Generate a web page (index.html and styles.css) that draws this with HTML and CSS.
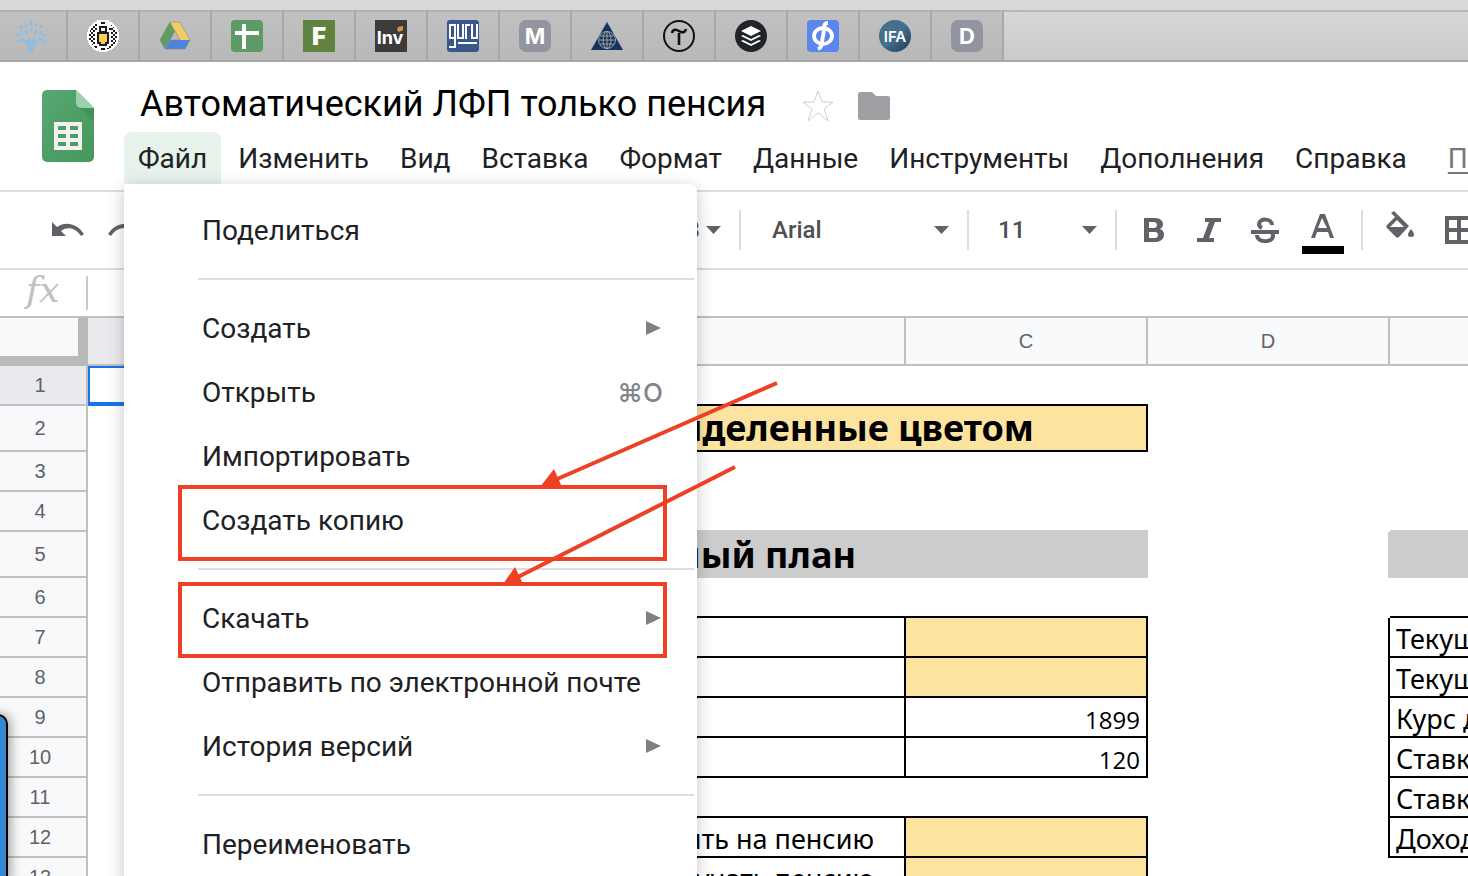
FILE: index.html
```html
<!DOCTYPE html>
<html lang="ru">
<head>
    <meta charset="UTF-8" />
    <meta name="viewport" content="width=device-width, initial-scale=1" />
    <title>Автоматический ЛФП только пенсия</title>
    <link rel="stylesheet" href="styles.css">
</head>
<body>
    <nav class="tabs" aria-label="Закреплённые вкладки">
        <button class="tab" aria-label="Дерево">
            <svg viewBox="0 0 32 32" fill="#8fbde3">
                <path d="M13 32c1-5 0-7-3-9l-5-5 1-1 6 4 1-4h1l2 5 3-5h1v4l6-4 1 1-6 6c-2 2-3 4-2 8z" />
                <g>
                    <ellipse cx="16" cy="3" rx="1.5" ry="3" /><ellipse cx="11" cy="5" rx="1.4" ry="2.4" transform="rotate(-25 11 5)" />
                    <ellipse cx="21" cy="5" rx="1.4" ry="2.4" transform="rotate(25 21 5)" /><ellipse cx="6" cy="7" rx="1.5" ry="2.5" transform="rotate(-45 6 7)" />
                    <ellipse cx="26" cy="7" rx="1.5" ry="2.5" transform="rotate(45 26 7)" /><ellipse cx="16" cy="10" rx="1.5" ry="2.6" />
                    <ellipse cx="11" cy="12" rx="1.4" ry="2.6" transform="rotate(-25 11 12)" /><ellipse cx="21" cy="12" rx="1.4" ry="2.6" transform="rotate(25 21 12)" />
                    <ellipse cx="6" cy="13" rx="1.3" ry="2.4" transform="rotate(-60 6 13)" /><ellipse cx="26" cy="13" rx="1.3" ry="2.4" transform="rotate(60 26 13)" />
                    <ellipse cx="2" cy="15" rx="1.3" ry="2.2" transform="rotate(-80 2 15)" /><ellipse cx="30" cy="15" rx="1.3" ry="2.2" transform="rotate(80 30 15)" />
                    <ellipse cx="4" cy="21" rx="1.4" ry="2.4" transform="rotate(70 4 21)" /><ellipse cx="28" cy="21" rx="1.4" ry="2.4" transform="rotate(-70 28 21)" />
                </g>
            </svg>
        </button>
        <button class="tab" aria-label="Пчела">
            <svg viewBox="0 0 32 32" shape-rendering="crispEdges">
                <defs>
                    <pattern id="checks" width="4" height="4" patternUnits="userSpaceOnUse">
                        <rect width="4" height="4" fill="#fff" /><path d="M0 0h2v2H0zM2 2h2v2H2z" fill="#1c1c22" />
                    </pattern>
                </defs>
                <circle cx="16" cy="16" r="16" fill="#fff" />
                <circle cx="16" cy="16" r="14" fill="url(#checks)" />
                <path d="M10 0h12v6h2v22h-4v4h-8v-4H8V6h2z" fill="#fff" />
                <path d="M14 2h4v2h-4zM12 6h8v6h2v12h-2v2h-8v-2h-2V12h2z" fill="#1c1c22" />
                <path d="M14 28h4v2h-4zM8 8h2v2H8zM22 8h2v2h-2zM8 26h2v2H8zM22 26h2v2h-2z" fill="#1c1c22" />
                <path d="M14 8h4v3h-4z" fill="#fff" /><path d="M12 14h8v8h-2v2h-4v-2h-2z" fill="#f7d04d" />
            </svg>
        </button>
        <button class="tab" aria-label="Google Диск">
            <svg viewBox="0 0 32 32">
                <path d="M11 2h10l10 18H21z" fill="#f3cb68" /><path d="M11 2l5 9L6 29 1 20z" fill="#5e9d62" />
                <path d="M11 20h20l-5 9H6z" fill="#4e83e0" />
                <path d="M11 2h10l10 18-5 9H6l-5-9zM16 11l-5 9h10z" fill="none" stroke="#83837a" stroke-width=".6" />
            </svg>
        </button>
        <button class="tab" aria-label="Таблица">
            <svg viewBox="0 0 32 32"><rect width="32" height="32" rx="4" fill="#5d9b66" /><path d="M11 4h4v7h13v4H15v14h-4V15H4v-4h7z" fill="#fff" /></svg>
        </button>
        <button class="tab" aria-label="F">
            <svg viewBox="0 0 32 32"><rect width="32" height="32" fill="#60833f" /><text class="glyph glyph-black" x="16" y="25" font-size="24">F</text></svg>
        </button>
        <button class="tab" aria-label="Inv">
            <svg viewBox="0 0 32 32"><rect width="32" height="32" fill="#3b3b3b" /><text class="glyph" x="15" y="24" font-size="18">Inv</text><path d="M23 7l5-1v4l-4 2-2-2z" fill="#d9963a" /></svg>
        </button>
        <button class="tab" aria-label="guru">
            <svg viewBox="0 0 32 32">
                <rect width="32" height="32" rx="3" fill="#38578d" />
                <g fill="none" stroke="#fff" stroke-width="2">
                    <path d="M8 18H3V5h5v22H2M11 4v14h5V4M19 19V5h4M25 4v14h5V4M11 23h19" />
                </g>
            </svg>
        </button>
        <button class="tab" aria-label="M">
            <svg viewBox="0 0 32 32"><rect width="32" height="32" rx="7" fill="#9295a0" /><text class="glyph" x="16" y="24" font-size="22">M</text></svg>
        </button>
        <button class="tab" aria-label="Глобус">
            <svg viewBox="0 0 32 32">
                <path d="M16 2l16 28H0z" fill="#15335f" />
                <g fill="none" stroke="#b9b9a8" stroke-width=".8">
                    <circle cx="16" cy="20" r="8.5" /><ellipse cx="16" cy="20" rx="4" ry="8.5" /><path d="M16 12v17M8 20h16M9 16h14M9 24h14" />
                </g>
            </svg>
        </button>
        <button class="tab" aria-label="T">
            <svg viewBox="0 0 32 32" fill="none" stroke="#111"><circle cx="16" cy="16" r="15" stroke-width="2" /><path d="M9 13c1-4 4-4 7-2s6 2 7-2M16 13v12" stroke-width="2.6" /></svg>
        </button>
        <button class="tab" aria-label="Buffer">
            <svg viewBox="0 0 32 32"><circle cx="16" cy="16" r="16" fill="#20242a" /><path d="M16 6l10 5-10 5-10-5z" fill="#fff" /><path d="M6 16l2-1 8 4 8-4 2 1-10 5zM6 21l2-1 8 4 8-4 2 1-10 5z" fill="#fff" /></svg>
        </button>
        <button class="tab" aria-label="Ф">
            <svg viewBox="0 0 32 32"><rect width="32" height="32" rx="4" fill="#5b86ee" /><g fill="none" stroke="#fff" stroke-width="3.8"><ellipse cx="16" cy="16" rx="9" ry="8" /><path d="M21 3c-4 0-4 3-4 7l-2 12c0 4-1 6-4 7" /></g></svg>
        </button>
        <button class="tab" aria-label="IFA">
            <svg viewBox="0 0 32 32">
                <defs><linearGradient id="ifa" x1="0" y1="0" x2="1" y2="1"><stop offset=".5" stop-color="#42708d" /><stop offset="1" stop-color="#22384f" /></linearGradient></defs>
                <circle cx="16" cy="16" r="16" fill="url(#ifa)" /><text class="glyph glyph-medium" x="16" y="22" font-size="15">IFA</text>
            </svg>
        </button>
        <button class="tab" aria-label="D">
            <svg viewBox="0 0 32 32"><rect width="32" height="32" rx="7" fill="#9295a0" /><text class="glyph" x="16" y="24" font-size="22">D</text></svg>
        </button>
    </nav>

    <header class="header">
        <svg class="logo" viewBox="0 0 52 72" aria-hidden="true">
            <defs><linearGradient id="sheet" x1="0" y1="0" x2="1" y2="1"><stop offset="0" stop-color="#57a773" /><stop offset="1" stop-color="#45985a" /></linearGradient></defs>
            <path d="M5 0h29l18 18v49a5 5 0 0 1-5 5H5a5 5 0 0 1-5-5V5a5 5 0 0 1 5-5z" fill="url(#sheet)" />
            <path d="M37 17l15 14V18z" fill="#3d8a56" opacity=".6" />
            <path d="M34 0l18 18H39a5 5 0 0 1-5-5z" fill="#9bd0b1" />
            <path d="M12 32h28v28H12zM16 36v4h8v-4zm12 0v4h8v-4zM16 44v4h8v-4zm12 0v4h8v-4zM16 52v4h8v-4zm12 0v4h8v-4z" fill="#f1f1f1" fill-rule="evenodd" />
        </svg>
        <div class="document">
            <div class="title-row">
                <h1 class="title">Автоматический ЛФП только пенсия</h1>
                <button class="icon-btn star" aria-label="Добавить в помеченные">
                    <svg width="32" height="32" viewBox="0 0 32 32"><path d="M16 1l4 11h11l-9 7 4 12-10-8-10 8 4-12-9-7h11z" fill="none" stroke="#cfcfcf" /></svg>
                </button>
                <button class="icon-btn" aria-label="Переместить в папку">
                    <svg width="32" height="28" viewBox="0 0 32 28"><path d="M2 0h12l4 4h12a2 2 0 0 1 2 2v20a2 2 0 0 1-2 2H2a2 2 0 0 1-2-2V2a2 2 0 0 1 2-2z" fill="#9f9fa3" /></svg>
                </button>
            </div>
            <div class="menubar">
                <div class="menu-wrap">
                    <button class="menu-btn open">Файл</button>
                    <div class="menu" role="menu">
                        <button class="item" role="menuitem">Поделиться</button>
                        <hr class="rule">
                        <button class="item" role="menuitem">Создать <svg class="more" viewBox="0 0 15 14"><path d="M0 0l15 7-15 7z" /></svg></button>
                        <button class="item" role="menuitem">Открыть <kbd class="keys">⌘O</kbd></button>
                        <button class="item" role="menuitem">Импортировать</button>
                        <button class="item" role="menuitem">Создать копию</button>
                        <hr class="rule">
                        <button class="item" role="menuitem">Скачать <svg class="more" viewBox="0 0 15 14"><path d="M0 0l15 7-15 7z" /></svg></button>
                        <button class="item" role="menuitem">Отправить по электронной почте</button>
                        <button class="item" role="menuitem">История версий <svg class="more" viewBox="0 0 15 14"><path d="M0 0l15 7-15 7z" /></svg></button>
                        <hr class="rule">
                        <button class="item" role="menuitem">Переименовать</button>
                    </div>
                </div>
                <button class="menu-btn">Изменить</button>
                <button class="menu-btn">Вид</button>
                <button class="menu-btn">Вставка</button>
                <button class="menu-btn">Формат</button>
                <button class="menu-btn">Данные</button>
                <button class="menu-btn">Инструменты</button>
                <button class="menu-btn">Дополнения</button>
                <button class="menu-btn">Справка</button>
                <a class="history" href="#">Последнее изменение</a>
            </div>
        </div>
    </header>

    <div class="toolbar" role="toolbar">
        <div class="group group-left">
            <button class="icon-btn" aria-label="Отменить">
                <svg width="32" height="18" viewBox="0 0 32 18"><path d="M0 1v14h14l-5-5c6-5 15-3 20 5l3-2C25 2 13 0 5 6z" fill="#5f6368" /></svg>
            </button>
            <button class="icon-btn redo" aria-label="Повторить">
                <svg width="32" height="18" viewBox="0 0 32 18"><path d="M32 1v14H18l5-5C17 5 8 7 3 15l-3-2C7 2 19 0 27 6z" fill="#5f6368" /></svg>
            </button>
            <button class="format-btn">123 <svg class="caret" viewBox="0 0 15 8"><path d="M0 0h15L7.500 8z" /></svg></button>
        </div>
        <label class="group group-font">
            <select class="select" aria-label="Шрифт"><option>Arial</option></select>
            <svg class="caret" viewBox="0 0 15 8"><path d="M0 0h15L7.500 8z" /></svg>
        </label>
        <label class="group group-size">
            <select class="select" aria-label="Размер шрифта"><option>11</option></select>
            <svg class="caret" viewBox="0 0 15 8"><path d="M0 0h15L7.500 8z" /></svg>
        </label>
        <div class="group group-style">
            <button class="tool" aria-label="Полужирный">
                <svg viewBox="2 0 42 48"><path d="M12 12h11c5 0 8 3 8 6 0 2-1 4-3 5 3 1 4 3 4 6 0 4-4 7-8 7H12zm5 4v6h5c4 0 4-6 0-6zm0 10v6h6c4 0 4-6 0-6z" fill-rule="evenodd" /></svg>
            </button>
            <button class="tool" aria-label="Курсив">
                <svg viewBox="2 0 42 48"><path d="M17 12h16v4h-6l-6 16h5v4H9v-4h6l6-16h-4z" /></svg>
            </button>
            <button class="tool" aria-label="Зачёркнутый">
                <svg viewBox="2 0 42 48"><path d="M7 24h28v4H7z" /><path d="M28 19c0-7-13-7-13-1 0 2 1 3 3 4M13 29c0 8 16 8 16 1 0-1 0-2-1-3" fill="none" stroke="#5f6368" stroke-width="4" /></svg>
            </button>
            <button class="tool" aria-label="Цвет текста">
                <svg viewBox="0 0 42 48"><path d="M18 8h5l9 24h-4l-2-6H15l-2 6H9zM20 12l-4 10h9z" fill-rule="evenodd" /><path d="M0 40h42v8H0z" fill="#000" /></svg>
            </button>
        </div>
        <div class="group group-fill">
            <button class="tool" aria-label="Цвет заливки">
                <svg viewBox="0 0 42 48"><path d="M13 7l3-2 15 15-10 11c-1 1-2 1-3 0l-9-9c-1-1-1-2 0-3l8-8zm6 7l-7 7h14z" fill-rule="evenodd" /><path d="M33 23c4 5 4 8 0 8s-4-3 0-8z" /></svg>
            </button>
            <button class="tool" aria-label="Границы">
                <svg viewBox="0 0 42 48"><path d="M7 10h28v28H7zM11 14v8h8v-8zm12 0v8h8v-8zM11 26v8h8v-8zm12 0v8h8v-8z" fill-rule="evenodd" /></svg>
            </button>
        </div>
    </div>

    <div class="formula-bar">
        <label class="fx" for="formula">fx</label>
        <input class="formula" id="formula" type="text">
    </div>

    <main class="sheet">
        <table class="grid">
            <colgroup>
                <col class="col-head"><col class="col-a"><col class="col-b"><col class="col-c"><col class="col-d"><col class="col-e">
            </colgroup>
            <thead>
                <tr><th class="corner"></th><th class="selected">A</th><th>B</th><th>C</th><th>D</th><th>E</th></tr>
            </thead>
            <tbody>
                <tr><th class="selected">1</th><td class="active"></td><td class="line-b"></td><td class="line-b"></td><td></td><td></td></tr>
                <tr class="tall"><th>2</th><td></td><td class="heading heading-top input line-b line-r" colspan="2">Ячейки, выделенные цветом</td><td></td><td></td></tr>
                <tr><th>3</th><td></td><td></td><td></td><td></td><td></td></tr>
                <tr><th>4</th><td></td><td class="band-top"></td><td class="band-top"></td><td></td><td class="band-top"></td></tr>
                <tr class="tall"><th>5</th><td></td><td class="heading heading-plan band" colspan="2">Пенсионный план</td><td class="band-r"></td><td class="band"></td></tr>
                <tr><th>6</th><td></td><td class="line-b"></td><td class="line-b"></td><td></td><td class="line-b"></td></tr>
                <tr><th>7</th><td></td><td class="line-b line-r"></td><td class="input line-b line-r"></td><td class="line-r"></td><td class="line-b">Текущий год</td></tr>
                <tr><th>8</th><td></td><td class="line-b line-r"></td><td class="input line-b line-r"></td><td class="line-r"></td><td class="line-b">Текущий месяц</td></tr>
                <tr><th>9</th><td></td><td class="line-b line-r"></td><td class="number line-b line-r">1899</td><td class="line-r"></td><td class="line-b">Курс доллара</td></tr>
                <tr><th>10</th><td></td><td class="line-b line-r"></td><td class="number line-b line-r">120</td><td class="line-r"></td><td class="line-b">Ставка</td></tr>
                <tr><th>11</th><td></td><td class="line-b"></td><td class="line-b"></td><td class="line-r"></td><td class="line-b">Ставка</td></tr>
                <tr><th>12</th><td></td><td class="label line-b line-r">Копить на пенсию</td><td class="input line-b line-r"></td><td class="line-r"></td><td class="line-b">Доходность</td></tr>
                <tr><th>13</th><td></td><td class="label line-b line-r">Получать пенсию</td><td class="input line-b line-r"></td><td></td><td></td></tr>
            </tbody>
        </table>
    </main>

    <aside class="widget"></aside>

    <!-- Highlights over the menu -->
    <svg class="marks" aria-hidden="true">
        <g fill="none" stroke="#ed4024" stroke-width="4">
            <rect x="180" y="487" width="485" height="72" />
            <rect x="180" y="584" width="485" height="72" />
            <path d="M777 383L555 480M735 467L516 578" />
        </g>
        <path d="M540 487l14-18 8 18zM503 584l12-17 8 17z" fill="#ed4024" />
    </svg>
</body>
</html>
```
FILE: styles.css
```css
*, *::before, *::after {
    box-sizing: border-box;
}

body {
    margin: 0;
    height: 100vh;
    overflow: hidden;
    position: relative;
    background: #fff;
    color: #202124;
    font-family: Roboto, Arial, sans-serif;
    font-size: 28px;
}

button {
    padding: 0;
    border: none;
    background: none;
    color: inherit;
    font: inherit;
    cursor: pointer;
}

svg {
    display: block;
}

/* Browser tabs */
.tabs {
    display: flex;
    height: 62px;
    padding-top: 10px;
    background: linear-gradient(#dadada, #cacaca);
    border-bottom: 2px solid #a6a6a6;
    overflow: hidden;
}

.tab {
    flex: none;
    display: flex;
    align-items: center;
    justify-content: center;
    width: 72px;
    border-top: 2px solid #b2b2b2;
    border-right: 2px solid #a8a8a8;
    background: linear-gradient(#c1c1c1, #b8b8b8);
}

.tab:first-child {
    margin-left: -4px;
}

.tab svg {
    width: 32px;
    height: 32px;
}

.tabs::after {
    content: "";
    flex: 1;
    border-top: 2px solid #b8b8b8;
}

.glyph {
    fill: #fff;
    font-family: Inter, sans-serif;
    font-weight: 700;
    text-anchor: middle;
}

.glyph-medium {
    font-weight: 600;
}

.glyph-black {
    font-weight: 900;
}

/* Document header */
.header {
    display: flex;
    height: 130px;
    padding: 14px 0 0 42px;
    border-bottom: 2px solid #dadce0;
    white-space: nowrap;
}

.logo {
    flex: none;
    width: 52px;
    height: 72px;
    margin: 14px 30px 0 0;
}

.document {
    flex: 1;
    min-width: 0;
}

.title-row {
    display: flex;
    align-items: center;
    height: 56px;
    padding-left: 16px;
}

.title-row .icon-btn {
    padding-top: 3px;
}

.title {
    margin: 0;
    color: #000;
    font-size: 36px;
    font-weight: 400;
}

.star {
    margin: 0 24px 0 36px;
}

.menubar {
    display: flex;
    align-items: center;
    gap: 3px;
    height: 52px;
}

.menu-wrap {
    position: relative;
}

.menu-btn {
    height: 52px;
    padding: 0 14px;
    border-radius: 8px 8px 0 0;
}

.menu-btn.open {
    background: #e6f2ea;
}

.history {
    margin-left: 24px;
    color: #777;
    text-underline-offset: 4px;
}

.menu {
    position: absolute;
    top: 100%;
    left: 0;
    z-index: 2;
    width: 573px;
    padding: 14px 0;
    background: #fff;
    border-radius: 0 8px 8px 8px;
    box-shadow: 0 4px 16px rgba(0, 0, 0, 0.24);
}

.item {
    display: flex;
    align-items: center;
    justify-content: space-between;
    width: 100%;
    height: 64px;
    padding: 0 34px 0 78px;
}

.more {
    width: 15px;
    height: 14px;
    margin-right: 2px;
    fill: #808080;
}

.keys {
    color: #80868b;
    font-family: Inter, "DejaVu Sans", sans-serif;
    font-size: 26px;
    font-weight: 500;
}

.rule {
    height: 2px;
    margin: 16px 3px 16px 74px;
    border: none;
    background: #dadce0;
}

/* Toolbar */
.toolbar {
    display: flex;
    align-items: center;
    height: 78px;
    border-bottom: 2px solid #dadce0;
    color: #4f4f4f;
    font-size: 24px;
    font-weight: 500;
    overflow: hidden;
}

.group {
    flex: none;
    display: flex;
    align-items: center;
    height: 40px;
    border-right: 2px solid #dadce0;
}

.group-left {
    width: 741px;
    padding: 0 18px 0 52px;
}

.redo {
    margin-left: 24px;
}

.format-btn {
    display: flex;
    align-items: center;
    gap: 6px;
    margin-left: auto;
}

.group-font {
    width: 228px;
    padding: 0 18px 0 31px;
}

.group-size {
    width: 148px;
    padding: 0 18px 0 29px;
}

.group-style {
    gap: 14px;
    padding: 0 17px;
}

.group-fill {
    gap: 18px;
    padding-left: 15px;
    border: none;
}

.select {
    flex: 1;
    min-width: 0;
    padding: 0;
    border: none;
    background: none;
    color: inherit;
    font: inherit;
    appearance: none;
}

.caret {
    flex: none;
    width: 15px;
    height: 8px;
    fill: #5f6368;
}

.tool svg {
    width: 42px;
    height: 48px;
    fill: #5f6368;
}

/* Formula bar */
.formula-bar {
    display: flex;
    align-items: center;
    height: 48px;
    border-bottom: 2px solid #c0c0c0;
}

.fx {
    width: 88px;
    height: 34px;
    padding-left: 26px;
    border-right: 2px solid #c9c9c9;
    color: #c0c0c0;
    font: italic 36px/28px "DejaVu Serif", serif;
}

.formula {
    flex: 1;
    height: 34px;
    border: none;
    outline: none;
    font: inherit;
}

/* Sheet */
.sheet {
    overflow: hidden;
}

.grid {
    width: 100%;
    table-layout: fixed;
    border-collapse: separate;
    border-spacing: 0;
    color: #000;
}

.col-head {
    width: 88px;
}

.col-a {
    width: 110px;
}

.col-b {
    width: 708px;
}

.col-c, .col-d {
    width: 242px;
}

.col-e {
    width: 400px;
}

.grid tr {
    height: 40px;
}

.grid thead tr {
    height: 48px;
}

.grid .tall {
    height: 46px;
}

.grid th {
    padding: 0;
    background: #f8f9fa;
    border: solid #c0c0c0;
    border-width: 0 2px 2px 0;
    color: #5f6368;
    font: 20px/24px "Liberation Sans", Arial, sans-serif;
}

.grid tbody th {
    padding-right: 6px;
}

.grid .selected {
    background: #e8eaed;
}

.grid .corner {
    border-width: 0 10px 10px 0;
    border-color: #b9b9b9;
}

.grid td {
    padding: 4px 6px 0;
    font: 27px/32px "Noto Sans", "Open Sans", sans-serif;
    white-space: nowrap;
    overflow: hidden;
}

.grid .line-b {
    border-bottom: 2px solid #000;
}

.grid .line-r {
    border-right: 2px solid #000;
}

.grid .active {
    border-bottom: 2px solid #1a73e8;
    box-shadow: inset 0 0 0 2px #1a73e8;
}

.grid .input {
    background: #fce4a0;
}

.grid .band {
    background: #ccc;
}

.grid .band-top {
    border-bottom: 2px solid #ccc;
}

.grid .band-r {
    border-right: 2px solid #ccc;
}

.grid .heading {
    padding-top: 0;
    padding-bottom: 0;
    font-size: 36px;
    font-weight: 700;
    line-height: 44px;
    text-align: right;
}

.grid .heading-top {
    padding-right: 112px;
}

.grid .heading-plan {
    padding-right: 292px;
}

.grid .label {
    padding-right: 30px;
    text-align: right;
}

.grid .number {
    padding-top: 6px;
    font-family: "Open Sans", sans-serif;
    font-size: 24px;
    text-align: right;
}

/* Floating panel at the left edge */
.widget {
    position: absolute;
    top: 714px;
    left: -12px;
    bottom: -12px;
    width: 20px;
    background: #3488d0;
    border: 2px solid #000;
    border-radius: 10px;
    box-shadow: 2px 0 12px rgba(0, 0, 0, 0.4);
}

.marks {
    position: absolute;
    inset: 0;
    z-index: 3;
    width: 100%;
    height: 100%;
    pointer-events: none;
}
```
